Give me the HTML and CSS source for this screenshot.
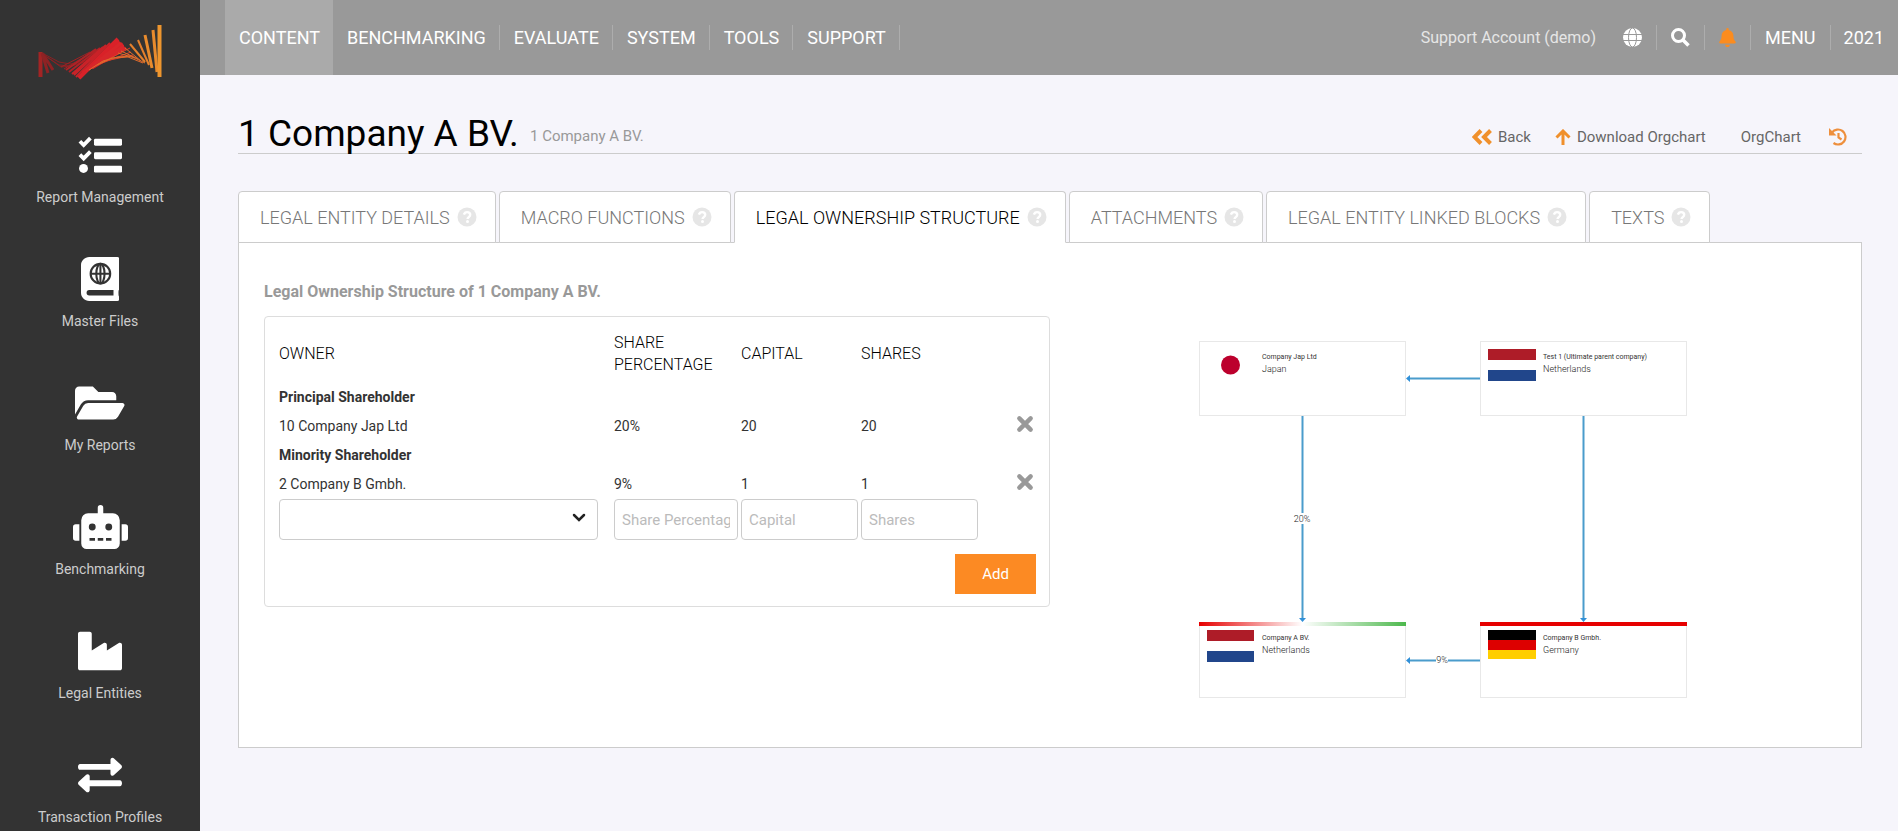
FILE: index.html
```html
<!DOCTYPE html>
<html lang="en">
<head>
<meta charset="utf-8">
<title>1 Company A BV.</title>
<link rel="stylesheet" href="styles.css">
</head>
<body>
<svg class="defs" aria-hidden="true">
  <symbol id="help" viewBox="0 0 20 20"><circle cx="10" cy="10" r="9.5" fill="#e6e6e6"/><path d="M6.9 7.6C7.4 5.9 8.5 5.1 10.1 5.1c1.800 0 3.100 1.100 3.100 2.700 0 2.200-2.600 2.300-2.600 4.100" fill="none" stroke="#fff" stroke-width="2.400"/><circle cx="10.500" cy="14.500" r="1.500" fill="#fff"/></symbol>
  <symbol id="cross" viewBox="0 0 16 16"><path d="M3 3l10 10M13 3L3 13" fill="none" stroke="#999" stroke-width="4" stroke-linecap="round"/></symbol>
</svg>
<div class="app">
  <aside class="sidebar">
    <a class="logo" href="#" aria-label="Home">
      <svg width="126" height="56" viewBox="0 0 126 56">
        <g fill="none">
          <path stroke="#a32424" stroke-width="4" d="M3.500 28v25"/>
          <path stroke="#8f2224" stroke-width="3" d="M5 29l6 20M6 30l10 16"/>
          <path stroke="#8a2123" stroke-width="1" d="M5 29l17 9 11 2 10-2 18-9M7 31l15 10 12 1 12-4 10-5M10 33l14 10 10-1 14-4"/>
          <path stroke="#9f2224" stroke-width="1" d="M24 43l29-15M27 45l28-17"/>
          <path stroke="#b02226" stroke-width="2" d="M29 46l30-21M32 48l31-24"/>
          <path stroke="#c92228" stroke-width="2" d="M35 50l31-27M37 51l32-30M39 53l34-34M42 54l35-36"/>
          <path stroke="#d92128" stroke-width="4" d="M42 54l39-39M46 49l37-31M52 44l34-24"/>
          <path stroke="#d8262a" stroke-width="3" d="M49 47l35-28M55 44l34-20M50 46l37-24"/>
          <path stroke="#dd3c2a" stroke-width="1" d="M58 42l35-18M60 41l34-13M64 38l32-7"/>
          <path stroke="#e06b2c" stroke-width="1" d="M52 46l14-9 14-4 14-1 14 7M60 41l15-7 16-1 15 6M81 29l17 5M84 27l17 8M88 24l16 13"/>
          <path stroke="#e5802c" stroke-width="2" d="M93 20l15 18M101 16l11 25"/>
          <path stroke="#e88b2d" stroke-width="3" d="M108 11l7 33M116 6l4 42"/>
          <path stroke="#ee962e" stroke-width="4" d="M122.500 1v52"/>
        </g>
      </svg>
    </a>
    <nav class="side-nav">
      <a class="side-item" href="#">
        <svg class="side-icon" viewBox="0 0 512 512" fill="currentColor"><path d="M22 96l44 44 78-80M22 252l44 44 78-80" fill="none" stroke="currentColor" stroke-width="44"/><circle cx="64" cy="412" r="52"/><rect x="186" y="68" width="326" height="80" rx="16"/><rect x="186" y="224" width="326" height="80" rx="16"/><rect x="186" y="380" width="326" height="80" rx="16"/></svg>
        <span>Report Management</span></a>
      <a class="side-item" href="#">
        <svg class="side-icon" viewBox="0 0 448 512"><path fill="currentColor" d="M96 0C43 0 0 43 0 96v320c0 53 43 96 96 96h328c14 0 24-10 24-24v-16c0-8-4-14-9-19-4-15-4-54 0-69 5-5 9-11 9-18V24c0-14-10-24-24-24z"/><path fill="#333" d="M96 384h282v64H96c-42 0-42-64 0-64z"/><g fill="none" stroke="#333" stroke-width="24"><circle cx="226" cy="194" r="114"/><ellipse cx="226" cy="194" rx="48" ry="114"/><path d="M110 194h232M226 78v232"/></g></svg>
        <span>Master Files</span></a>
      <a class="side-item" href="#">
        <svg class="side-icon" viewBox="0 0 576 512"><path fill="currentColor" d="M572.700 292.100l-72.400 124.200A64 64 0 0 1 445 448H45c-18.500 0-30.100-20.100-20.700-36.100l72.400-124.200A64 64 0 0 1 152 256h400c18.500 0 30.100 20.100 20.700 36.100zM152 224h328v-48c0-26.500-21.500-48-48-48H272l-64-64H48C21.500 64 0 85.500 0 112v278l69-118.400C86.200 242.200 118 224 152 224z"/></svg>
        <span>My Reports</span></a>
      <a class="side-item" href="#">
        <svg class="side-icon" viewBox="0 0 640 512"><path fill="currentColor" d="M32 224h42v192H32a32 32 0 0 1-32-32V256a32 32 0 0 1 32-32zm512-48v272a64 64 0 0 1-64 64H160a64 64 0 0 1-64-64V176a80 80 0 0 1 80-80h112V32a32 32 0 0 1 64 0v64h112a80 80 0 0 1 80 80zM264 256a40 40 0 1 0-40 40 40 40 0 0 0 40-40zm-8 128h-64v32h64zm96 0h-64v32h64zm104-128a40 40 0 1 0-40 40 40 40 0 0 0 40-40zm-8 128h-64v32h64zm192-128v128a32 32 0 0 1-32 32h-42V224h42a32 32 0 0 1 32 32z"/></svg>
        <span>Benchmarking</span></a>
      <a class="side-item" href="#">
        <svg class="side-icon" viewBox="0 0 512 512"><path fill="currentColor" d="M475 163L336 251v-68c0-19-21-30-37-20l-139 88V56c0-13-11-24-24-24H24C11 32 0 43 0 56v400c0 13 11 24 24 24h464c13 0 24-11 24-24V183c0-19-21-30-37-20z"/></svg>
        <span>Legal Entities</span></a>
      <a class="side-item" href="#">
        <svg class="side-icon" viewBox="0 0 512 512"><path fill="currentColor" d="M24 128h354V80c0-21 26-32 41-17l86 80c9 9 9 25 0 34l-86 80c-15 15-41 4-41-17v-44H24c-32 0-32-68 0-68zM488 316H136v-46c0-21-26-32-41-17L7 335c-9 9-9 25 0 34l88 82c15 15 41 4 41-17v-48h352c32 0 32-70 0-70z"/></svg>
        <span>Transaction Profiles</span></a>
    </nav>
  </aside>
  <div class="main">
    <header class="topbar">
      <nav class="menu">
        <a class="menu-item active" href="#">CONTENT</a>
        <a class="menu-item" href="#">BENCHMARKING</a>
        <a class="menu-item" href="#">EVALUATE</a>
        <a class="menu-item" href="#">SYSTEM</a>
        <a class="menu-item" href="#">TOOLS</a>
        <a class="menu-item" href="#">SUPPORT</a>
      </nav>
      <div class="tools">
        <span class="account">Support Account (demo)</span>
        <button class="tool" aria-label="Language"><svg width="19" height="19" viewBox="0 0 19 19"><circle cx="9.500" cy="9.500" r="9.500" fill="#fff"/><g fill="none" stroke="#999"><ellipse cx="9.500" cy="9.500" rx="4" ry="9.500"/><path d="M0 6.500h19M0 12.500h19"/></g></svg></button>
        <button class="tool" aria-label="Search"><svg width="19" height="19" viewBox="0 0 19 19"><circle cx="7.500" cy="7.500" r="6" fill="none" stroke="#fff" stroke-width="3"/><path d="M12 12l5.500 5.500" stroke="#fff" stroke-width="3.500"/></svg></button>
        <button class="tool" aria-label="Notifications"><svg width="17" height="19" viewBox="0 0 448 512"><path fill="#fb8c1f" d="M224 512c35.300 0 64-28.700 64-64H160c0 35.300 28.700 64 64 64zm215.400-149.700c-19.300-20.800-55.500-52-55.500-154.300 0-77.700-54.500-139.900-127.900-155.200V32c0-17.700-14.300-32-32-32s-32 14.300-32 32v20.800C118.600 68.100 64.100 130.300 64.100 208c0 102.300-36.200 133.500-55.500 154.300A31 31 0 0 0 0 384c.1 16.400 13 32 32.100 32h383.800c19.100 0 32-15.600 32.100-32a31 31 0 0 0-8.600-21.700z"/></svg></button>
        <a class="tool" href="#">MENU</a>
        <a class="tool" href="#">2021</a>
      </div>
    </header>
    <main class="page">
      <div class="page-head">
        <h1 class="title">1 Company A BV. <small>1 Company A BV.</small></h1>
        <div class="actions">
          <a class="back" href="#"><svg width="20" height="16" viewBox="0 0 20 16"><path d="M9 1.500L2.500 8 9 14.500M18.500 1.500L12 8l6.500 6.500" fill="none" stroke="#f0902c" stroke-width="4"/></svg>Back</a>
          <a class="download" href="#"><svg width="16" height="16" viewBox="0 0 16 16"><path d="M8 16V2.500M1.500 8.500L8 2l6.500 6.500" fill="none" stroke="#f0902c" stroke-width="3"/></svg>Download Orgchart</a>
          <a class="chart" href="#">OrgChart</a>
          <button class="history" aria-label="History"><svg width="18" height="18" viewBox="0 0 18 18"><path d="M3 4.500A7.500 7.500 0 1 1 4.500 15M9.500 5v4.500l3 2" fill="none" stroke="#ee8f3c" stroke-width="2.200"/><path d="M0 0v7.500h7.500z" fill="#ee8f3c"/></svg></button>
        </div>
      </div>
      <nav class="tabs">
        <a class="tab" href="#">LEGAL ENTITY DETAILS<svg class="help"><use href="#help"/></svg></a>
        <a class="tab" href="#">MACRO FUNCTIONS<svg class="help"><use href="#help"/></svg></a>
        <a class="tab active" href="#">LEGAL OWNERSHIP STRUCTURE<svg class="help"><use href="#help"/></svg></a>
        <a class="tab" href="#">ATTACHMENTS<svg class="help"><use href="#help"/></svg></a>
        <a class="tab" href="#">LEGAL ENTITY LINKED BLOCKS<svg class="help"><use href="#help"/></svg></a>
        <a class="tab" href="#">TEXTS<svg class="help"><use href="#help"/></svg></a>
      </nav>
      <section class="panel">
        <div class="ownership">
          <h2 class="panel-title">Legal Ownership Structure of 1 Company A BV.</h2>
          <form class="card">
            <table class="owners">
              <colgroup><col class="c-owner"><col class="c-pct"><col class="c-num"><col class="c-num"><col></colgroup>
              <thead><tr><th>OWNER</th><th>SHARE PERCENTAGE</th><th>CAPITAL</th><th>SHARES</th><th></th></tr></thead>
              <tbody>
                <tr class="group"><td colspan="5">Principal Shareholder</td></tr>
                <tr><td>10 Company Jap Ltd</td><td>20%</td><td>20</td><td>20</td><td class="remove"><button type="button" aria-label="Remove"><svg width="18" height="18"><use href="#cross"/></svg></button></td></tr>
                <tr class="group"><td colspan="5">Minority Shareholder</td></tr>
                <tr><td>2 Company B Gmbh.</td><td>9%</td><td>1</td><td>1</td><td class="remove"><button type="button" aria-label="Remove"><svg width="18" height="18"><use href="#cross"/></svg></button></td></tr>
                <tr class="entry">
                  <td><div class="picker"><select class="field" aria-label="Owner"><option></option></select><svg class="chevron" width="14" height="10" viewBox="0 0 14 10"><path d="M2 2l5 5 5-5" fill="none" stroke="#222" stroke-width="2.500" stroke-linecap="round"/></svg></div></td>
                  <td><input class="field" type="text" placeholder="Share Percentage" aria-label="Share Percentage"></td>
                  <td><input class="field" type="text" placeholder="Capital" aria-label="Capital"></td>
                  <td><input class="field" type="text" placeholder="Shares" aria-label="Shares"></td>
                  <td></td>
                </tr>
              </tbody>
            </table>
            <div class="submit"><button class="add" type="button">Add</button></div>
          </form>
        </div>
        <div class="chart-area">
          <svg class="orgchart" width="488" height="357" viewBox="0 0 488 357">
            <defs>
              <linearGradient id="stripe"><stop offset="0" stop-color="#e60000"/><stop offset=".5" stop-color="#fff"/><stop offset="1" stop-color="#4cb84c"/></linearGradient>
            </defs>
            <g class="node"><rect x=".5" y=".5" width="206" height="74"/><rect x="281.500" y=".5" width="206" height="74"/><rect x=".5" y="282.500" width="206" height="74"/><rect x="281.500" y="282.500" width="206" height="74"/></g>
            <rect y="281" width="207" height="4" fill="url(#stripe)"/>
            <rect x="281" y="281" width="207" height="4" fill="#e60000"/>
            <circle cx="31.500" cy="24" r="9.500" fill="#bc002d"/>
            <path fill="#ae1c28" d="M289 8h48v11h-48zM8 289h47v11H8z"/>
            <path fill="#21468b" d="M289 29h48v11h-48zM8 310h47v11H8z"/>
            <path fill="#000" d="M289 289h48v10h-48z"/><path fill="#d00" d="M289 299h48v10h-48z"/><path fill="#ffce00" d="M289 309h48v9h-48z"/>
            <g class="link"><path d="M103.500 75v203M384.500 75v203M281 37.500h-71M281 319.500h-71"/></g>
            <path fill="#3090d8" d="M100 277h7l-3.500 4zM381 277h7l-3.500 4zM211 34v7l-4-3.500zM211 316v7l-4-3.500z"/>
            <path fill="#fff" d="M97 172h13v11H97zM237 314h12v11h-12z"/>
            <g class="name"><text x="63" y="18">Company Jap Ltd</text><text x="344" y="18">Test 1 (Ultimate parent company)</text><text x="63" y="299">Company A BV.</text><text x="344" y="299">Company B Gmbh.</text></g>
            <g class="country"><text x="63" y="31">Japan</text><text x="344" y="31">Netherlands</text><text x="63" y="312">Netherlands</text><text x="344" y="312">Germany</text></g>
            <g class="country percent"><text x="103" y="181">20%</text><text x="243" y="322">9%</text></g>
          </svg>
        </div>
      </section>
    </main>
  </div>
</div>
</body>
</html>
```
FILE: styles.css
```css
* { box-sizing: border-box; }
body { margin: 0; background: #f6f5fb; font-family: Roboto, "Liberation Sans", sans-serif; font-size: 14px; color: #333; overflow: hidden; }
a { color: inherit; text-decoration: none; }
button { padding: 0; border: 0; background: none; font: inherit; color: inherit; cursor: pointer; }
svg { display: block; flex: none; }
.defs { position: absolute; width: 0; height: 0; }
.app { display: flex; height: 100vh; }

.sidebar { flex: 0 0 200px; background: #333; overflow: hidden; }
.logo { display: flex; justify-content: center; padding: 24px 0 53px; }
.side-nav { display: flex; flex-direction: column; }
.side-item { display: flex; flex-direction: column; align-items: center; gap: 9px; height: 124px; line-height: 22px; color: #ccc; }
.side-icon { height: 44px; color: #fff; }

.main { flex: 1; min-width: 0; }
.topbar { display: flex; justify-content: space-between; height: 75px; padding-left: 25px; background: #999; color: #fff; font-size: 18px; }
.menu, .tools { display: flex; align-items: center; }
.menu-item { padding: 0 13px 0 14px; border-right: 1px solid #adadad; line-height: 25px; }
.menu-item.active { border: 0; background: #aaa; line-height: 75px; }
.account { margin-right: 13px; font-size: 16px; color: #e6e6e6; }
.tool { display: flex; align-items: center; height: 25px; padding: 0 14px; border-right: 1px solid #adadad; }
.tool:last-child { border: 0; }
.tools .tool:last-child { padding-left: 13px; }

.page { padding: 27px 36px 0 38px; }
.page-head { display: flex; justify-content: space-between; height: 52px; border-bottom: 1px solid #ccc; }
.title { margin: 0; font-size: 37px; line-height: 64px; font-weight: 400; color: #000; white-space: nowrap; }
.title small { margin-left: 2px; font-size: 15px; font-weight: 400; line-height: 20px; vertical-align: middle; color: #999; }
.actions { display: flex; align-items: center; padding: 18px 15px 0 0; font-size: 15px; color: #666; }
.actions a { display: flex; align-items: center; gap: 6px; margin-right: 24px; }
.actions .download { margin-right: 35px; }
.actions .chart { margin-right: 28px; }

.tabs { display: flex; gap: 3px; margin-top: 37px; }
.tab { display: flex; align-items: center; gap: 7px; height: 52px; padding: 0 18px 0 21px; border: 1px solid #ccc; border-radius: 4px 4px 0 0; background: #fff; font-size: 18px; font-weight: 300; color: #777; white-space: nowrap; margin-bottom: -1px; }
.tab.active { border-bottom-color: #fff; color: #000; z-index: 1; }
.help { width: 20px; height: 20px; }
.panel { display: grid; grid-template-columns: 1fr 1fr; min-height: 506px; padding: 0 25px 48px; border: 1px solid #ccc; background: #fff; }
.panel-title { margin: 38px 0 13px; font-size: 16px; line-height: 22px; font-weight: 700; color: #999; }
.card { padding: 9px 13px 12px 14px; border: 1px solid #ddd; border-radius: 4px; }
.owners { width: 100%; border-collapse: collapse; table-layout: fixed; font-weight: 400; }
.c-owner { width: 335px; } .c-pct { width: 127px; } .c-num { width: 120px; }
.owners th, .owners td { padding: 0; text-align: left; }
.owners th { height: 56px; padding-right: 10px; font-size: 16px; line-height: 22px; font-weight: 300; color: #000; }
.owners tr { height: 29px; }
.owners .group td { font-weight: 700; }
.owners .remove { padding: 0 2px 3px 0; }
.remove button { display: block; margin-left: auto; }
.owners .entry td { padding-top: 1px; }
.entry .field { display: block; width: calc(100% - 3px); height: 41px; padding: 0 7px; border: 1px solid #ccc; border-radius: 4px; background: #fff; font: 400 15px Roboto, "Liberation Sans", sans-serif; }
.field::placeholder { color: #bbb; }
.picker { position: relative; width: 319px; }
.entry select.field { width: 100%; appearance: none; }
.chevron { position: absolute; right: 12px; top: 14px; }
.submit { display: flex; justify-content: flex-end; padding-top: 14px; }
.add { width: 81px; height: 40px; background: #fc8a23; color: #fff; font-size: 15px; }
.chart-area { display: flex; justify-content: center; padding-top: 98px; }
.node rect { fill: #fff; stroke: #e8e8e8; }
.link path { fill: none; stroke: #4a9ccc; stroke-width: 2px; }
.name { font-size: 7px; fill: #333; }
.country { font-size: 9px; font-weight: 300; fill: #222; }
.percent { text-anchor: middle; }
```
